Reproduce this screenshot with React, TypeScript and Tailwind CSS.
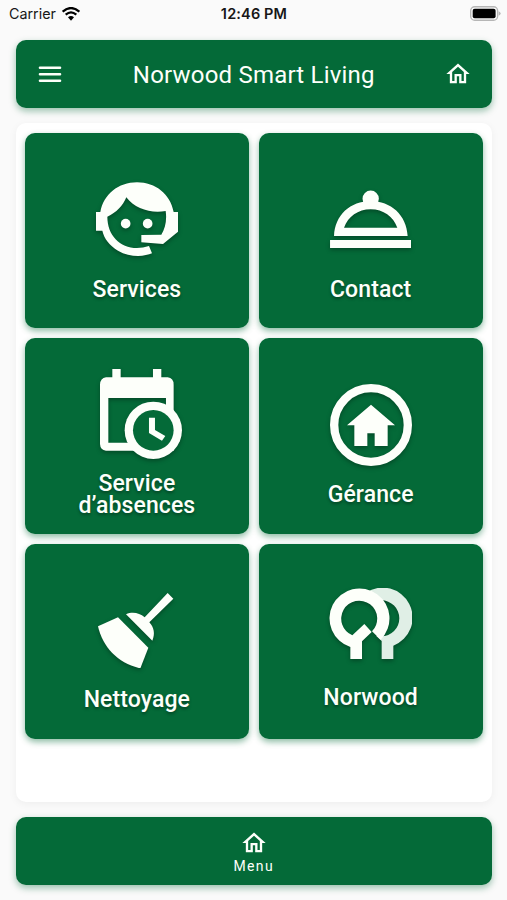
import type { ReactNode } from "react";

function HomeIcon() {
  return (
    <svg viewBox="0 0 24 24" className="block size-7 shrink-0" fill="currentColor">
      <path d="M12 5.69l5 4.5V18h-2v-6H9v6H7v-7.81l5-4.5M12 3L2 12h3v8h6v-6h2v6h6v-8h3L12 3z" />
    </svg>
  );
}

function ServicesIcon() {
  return (
    <>
      <path d="M62 141 C72 88 116 52 172 52 S272 88 282 141 H295 V200 L250 237 L185 232 V210 L245 209 C257 190 262 165 258 138 C215 146 165 132 140 97 C130 122 110 143 83 155 C83 210 120 249 172 249 Q190 249 208 243 L217 265 C195 275 150 278 115 257 C90 242 73 220 68 197 H49 V141 Z" />
      <circle cx="138" cy="176" r="14.5" />
      <circle cx="204" cy="176" r="14.5" />
    </>
  );
}

function ContactIcon() {
  return (
    <>
      <circle cx="182" cy="101" r="24.5" />
      <path fillRule="evenodd" d="M72 213 C74 150 122 108 182 108 S290 150 293 213Z M102 188 H262 C250 155 220 133 182 133 S114 155 102 188Z" />
      <path d="M60 225H305V249H60Z" />
    </>
  );
}

function AbsenceIcon() {
  return (
    <>
      <path d="M128 41H153V75H128ZM250 41H275V75H250Z" />
      <path fillRule="evenodd" d="M109 66H294Q312 68 312 88V286H109Q92 284 91 266V88Q92 68 109 66Z M116 128V262H289V128Z" />
      <circle cx="251" cy="225" r="86" />
      <circle cx="251" cy="225" r="61" fill="#046a38" />
      <path d="M238 187H256V224L287 242L277 256L238 233Z" />
    </>
  );
}

function GeranceIcon() {
  return (
    <>
      <circle cx="182" cy="164" r="110.5" fill="none" stroke="currentColor" strokeWidth="25" />
      <path d="M182 103L254 165H232V227H193V189H171V227H132V165H110Z" />
    </>
  );
}

function BroomIcon() {
  return (
    <>
      <path d="M277 37L294 54L222 125C236 140 240 160 231 180L152 101C172 92 192 97 208 110Z" />
      <path d="M68 137L128 110L219 201L195 263C130 250 82 200 68 137Z" />
    </>
  );
}

function NorwoodIcon() {
  return (
    <>
      <path fill="#e0efe6" d="M170 52A90 90 0 1 1 252 211V251H217V197L200 181L216 183A54 54 0 0 0 216 75Z" />
      <path d="M123 215A90 90 0 1 1 214 193L188 168A54 54 0 1 0 129 180L165 146L187 170L158 198V251H123Z" />
    </>
  );
}

type TileProps = { box: string; art: string; pad: string; icon: ReactNode; label: ReactNode };

function Tile({ box, art, pad, icon, label }: TileProps) {
  return (
    <button className={`flex flex-col items-center rounded-[10px] bg-[#046a38] shadow-[0_3px_6px_rgba(4,106,56,0.45)] ${pad}`}>
      <svg viewBox={box} className={`block shrink-0 drop-shadow-[0_2px_2px_rgba(0,0,0,0.3)] ${art}`} fill="currentColor">
        {icon}
      </svg>
      <span className="text-[23px] leading-[22px] font-medium tracking-[0.1px] [text-shadow:0_2px_3px_rgba(0,0,0,0.35)]">{label}</span>
    </button>
  );
}

export default function App() {
  return (
    <div className="flex h-[900px] w-[507px] flex-col overflow-hidden bg-[#fafafa] font-['Roboto',sans-serif] text-[#fdfffa]">
      <div className="flex h-[40px] shrink-0 items-start justify-between pt-[4px] pr-[6px] pl-[9px] font-['Inter',sans-serif] leading-5 text-[#171717]">
        <div className="flex flex-1 items-center gap-[6px]">
          <span className="text-[14.3px]">Carrier</span>
          <svg viewBox="0 0 54 42" className="h-[14px] w-[18px]" fill="none" stroke="black" strokeWidth="6.5">
            <path d="M2 14Q27 -8 52 14M11 23Q27 9 43 23" />
            <path d="M18 31Q27 23 36 31L27 41Z" fill="black" stroke="none" />
          </svg>
        </div>
        <span className="mr-[2px] text-[14.5px] font-semibold tracking-[0.15px] whitespace-nowrap">12:46 PM</span>
        <div className="flex flex-1 justify-end">
          <svg viewBox="0 0 92 44" className="mt-[2px] h-[15px] w-[31px]">
            <rect x="2" y="2" width="80" height="40" rx="12" fill="#fafafa" stroke="#b6b6b6" strokeWidth="4" />
            <rect x="8" y="8" width="68" height="28" rx="6" fill="black" />
            <path d="M85 15Q91 18 91 22T85 29Z" fill="#b6b6b6" />
          </svg>
        </div>
      </div>

      <header className="mr-[15px] ml-[15.5px] flex h-[68px] shrink-0 items-center justify-between rounded-[10px] bg-[#046a38] px-[20px] shadow-[0_3px_7px_rgba(4,106,56,0.4)]">
        <svg viewBox="0 0 28 28" className="size-7" stroke="currentColor" strokeWidth="2.6" strokeLinecap="round">
          <path d="M4 7.8H24M4 14.3H24M4 20.8H24" />
        </svg>
        <h1 className="pt-px text-[24px] leading-7 tracking-[0.2px]">Norwood Smart Living</h1>
        <HomeIcon />
      </header>

      <main className="mt-[15px] mr-[15px] ml-[16px] h-[679px] shrink-0 rounded-[10px] bg-white pt-[10px] pr-[9.5px] pl-[9px] shadow-[0_2px_8px_rgba(0,0,0,0.05)]">
        <div className="grid grid-cols-2 grid-rows-[195.4px_195.4px_195.4px] gap-[10px]">
          <Tile box="49 48 246 230" art="h-[76.7px] w-[82px]" pad="pt-[48px]" icon={<ServicesIcon />} label={<span className="mt-[21px] block">Services</span>} />
          <Tile box="60 75 245 175" art="h-[58.3px] w-[81.7px]" pad="pt-[57px]" icon={<ContactIcon />} label={<span className="mt-[30.5px] block">Contact</span>} />
          <Tile box="91 41 247 271" art="ml-[8px] h-[90.3px] w-[82.3px]" pad="pt-[30.5px]" icon={<AbsenceIcon />} label={<span className="mt-[13.5px] block">Service<br />d’absences</span>} />
          <Tile box="59 41 246 246" art="size-[82px]" pad="pt-[45.5px]" icon={<GeranceIcon />} label={<span className="mt-[18px] block">Gérance</span>} />
          <Tile box="68 37 246 227" art="ml-[4px] h-[75.7px] w-[82px]" pad="pt-[49px]" icon={<BroomIcon />} label={<span className="mt-[20.5px] block">Nettoyage</span>} />
          <Tile box="59 38 248 214" art="h-[71.3px] w-[82.7px]" pad="pt-[44.5px]" icon={<NorwoodIcon />} label={<span className="mt-[27.5px] block">Norwood</span>} />
        </div>
      </main>

      <nav className="mt-[15px] mr-[15px] ml-[15.5px] flex h-[68px] shrink-0 flex-col items-center rounded-[10px] bg-[#046a38] pt-[11.5px] shadow-[0_3px_7px_rgba(4,106,56,0.4)]">
        <HomeIcon />
        <span className="text-[14px] leading-[18px] tracking-[1.4px]">Menu</span>
      </nav>
    </div>
  );
}
